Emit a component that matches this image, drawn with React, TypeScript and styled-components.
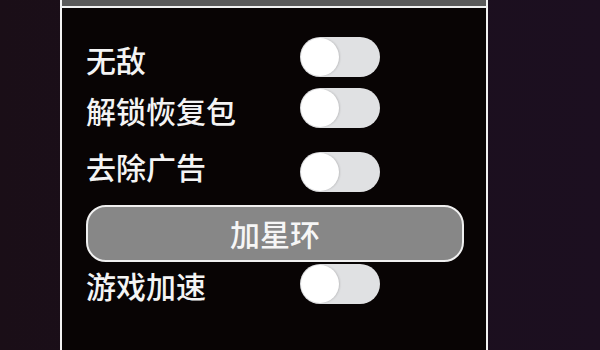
import React from "react";
import styled, { createGlobalStyle } from "styled-components";

const Global = createGlobalStyle`
  html, body {
    margin: 0;
    padding: 0;
    width: 600px;
    height: 350px;
    overflow: hidden;
    background: linear-gradient(90deg, #1a0e17 0%, #1b0f1d 50%, #1c0f20 100%);
    font-family: "Noto Sans CJK SC", "Noto Sans", sans-serif;
  }
`;

const Page = styled.div`
  width: 600px;
  height: 350px;
  display: flex;
  padding-left: 60px;
  box-sizing: border-box;
`;

const Panel = styled.div`
  width: 428px;
  height: 350px;
  box-sizing: border-box;
  border-left: 2px solid #f2f2f2;
  border-right: 2px solid #f2f2f2;
  background: #080404;
  display: flex;
  flex-direction: column;
`;

const Header = styled.div`
  height: 6px;
  background: #5b5b5b;
  border-bottom: 2px solid #f2f2f2;
`;

const Content = styled.div`
  display: flex;
  flex-direction: column;
  padding-left: 24px;
  padding-right: 23px;
`;

const Row = styled.div<{ $mt: number }>`
  display: flex;
  align-items: center;
  height: 40px;
  margin-top: ${(p) => p.$mt}px;
`;

const Label = styled.span<{ $dy?: number }>`
  width: 214px;
  color: #f4f4f4;
  font-size: 30px;
  font-weight: 500;
  line-height: 40px;
  position: relative;
  top: ${(p) => p.$dy ?? 0}px;
  white-space: nowrap;
`;

const Track = styled.div`
  width: 80px;
  height: 40px;
  border-radius: 20px;
  background: #e0e1e3;
  display: flex;
  align-items: center;
  padding: 1px;
  box-sizing: border-box;
`;

const Knob = styled.div`
  width: 38px;
  height: 38px;
  border-radius: 50%;
  background: #ffffff;
  box-shadow: 1px 0 2px rgba(0, 0, 0, 0.15);
`;

const ActionButton = styled.button`
  margin-top: 13px;
  width: 378px;
  height: 57px;
  box-sizing: border-box;
  border: 2px solid #f0f0f0;
  border-radius: 20px;
  background: #878787;
  color: #f6f6f6;
  font-family: "Noto Sans CJK SC", "Noto Sans", sans-serif;
  font-size: 30px;
  font-weight: 500;
  line-height: 1;
  padding: 0 0 2px;
  display: flex;
  align-items: center;
  justify-content: center;
`;

const Toggle = () => (
  <Track>
    <Knob />
  </Track>
);

export default function App() {
  return (
    <>
      <Global />
      <Page>
        <Panel>
          <Header />
          <Content>
            <Row $mt={29}>
              <Label $dy={2}>无敌</Label>
              <Toggle />
            </Row>
            <Row $mt={11}>
              <Label $dy={2}>解锁恢复包</Label>
              <Toggle />
            </Row>
            <Row $mt={24}>
              <Label $dy={-6}>去除广告</Label>
              <Toggle />
            </Row>
            <ActionButton>加星环</ActionButton>
            <Row $mt={2}>
              <Label $dy={1}>游戏加速</Label>
              <Toggle />
            </Row>
          </Content>
        </Panel>
      </Page>
    </>
  );
}
